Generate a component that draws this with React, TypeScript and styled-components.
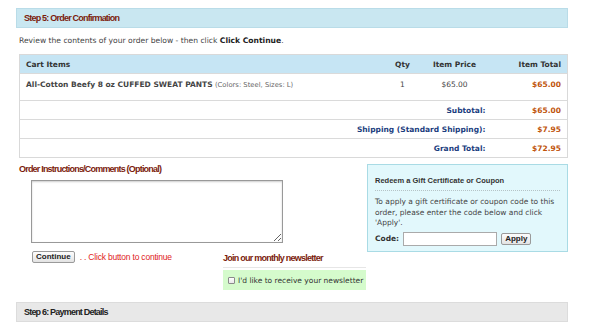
import React from 'react';
import styled, { createGlobalStyle } from 'styled-components';

const GlobalStyle = createGlobalStyle`
  body {
    margin: 0;
    background: #ffffff;
    font-family: 'DejaVu Sans', Verdana, sans-serif;
    color: #333333;
  }
`;

const Page = styled.div`
  width: 552px;
  padding: 8px 0 0 16px;
`;

const StepBar = styled.div<{ $grey?: boolean }>`
  height: 18px;
  display: flex;
  align-items: center;
  padding-left: 7px;
  background: ${(p) => (p.$grey ? '#e8e8e8' : '#c9e7f1')};
  border: 1px solid ${(p) => (p.$grey ? '#dcdcdc' : '#b9dce8')};
  font-family: 'Liberation Sans', Arial, sans-serif;
  font-weight: bold;
  font-size: 9px;
  letter-spacing: ${(p) => (p.$grey ? '-0.8px' : '-0.78px')};
  color: ${(p) => (p.$grey ? '#222222' : '#7b1b0c')};
`;

const Intro = styled.p`
  margin: 0;
  padding: 8px 0 0 3px;
  height: 18px;
  font-size: 7.6px;
  line-height: 10px;
  color: #444444;
  b {
    color: #222;
  }
`;

const CartTable = styled.table`
  margin-left: 3px;
  width: 549px;
  border-collapse: collapse;
  font-size: 7.5px;
  border: 1px solid #d9d9d9;
`;

const HeadCell = styled.th<{ $align?: string; $w?: number }>`
  height: 19px;
  padding: 0 6px;
  box-sizing: border-box;
  ${(p) => (p.$w ? `width: ${p.$w}px;` : '')}
  background: #c6e5f4;
  text-align: ${(p) => p.$align || 'left'};
  font-weight: bold;
  color: #333333;
  white-space: nowrap;
`;

const Cell = styled.td<{ $align?: string; $top?: boolean }>`
  height: ${(p) => (p.$top ? 20 : 18)}px;
  padding: ${(p) => (p.$top ? '6px 6px 0' : '0 6px')};
  vertical-align: ${(p) => (p.$top ? 'top' : 'middle')};
  text-align: ${(p) => p.$align || 'left'};
  border-top: 1px solid #dadada;
  color: #444444;
  white-space: nowrap;
  small {
    font-size: 6.8px;
    color: #666;
    font-weight: normal;
  }
`;

const Label = styled(Cell)`
  color: #1b3d7e;
  font-weight: bold;
  padding-right: 10px;
`;

const Amount = styled(Cell)`
  color: #c0540c;
  font-weight: bold;
`;

const Lower = styled.div`
  display: flex;
  padding-top: 6px;
`;

const LeftCol = styled.div`
  width: 348px;
  padding-left: 3px;
`;

const SectionTitle = styled.div`
  font-family: 'Liberation Sans', Arial, sans-serif;
  font-weight: bold;
  font-size: 9px;
  letter-spacing: -0.8px;
  color: #7b1b0c;
  height: 10px;
  line-height: 10px;
`;

const Comments = styled.textarea`
  display: block;
  margin: 6px 0 0 12px;
  width: 252px;
  height: 63px;
  box-sizing: border-box;
  border: 1px solid #999;
  box-shadow: inset 0 1px 2px rgba(0, 0, 0, 0.2);
  resize: both;
`;

const ActionRow = styled.div`
  display: flex;
  padding-top: 8px;
`;

const ContinueArea = styled.div`
  width: 191px;
  padding-left: 13px;
  display: flex;
  align-items: flex-start;
  gap: 5px;
`;

const SmallButton = styled.button`
  font-family: 'Liberation Sans', Arial, sans-serif;
  font-weight: bold;
  font-size: 8px;
  height: 12px;
  padding: 0 3px;
  line-height: 10px;
  color: #222;
  background: linear-gradient(#fdfdfd, #e3e3e3);
  border: 1px solid #9a9a9a;
  border-radius: 2px;
`;

const Hint = styled.span`
  font-family: 'Liberation Sans', Arial, sans-serif;
  font-size: 8.5px;
  color: #e01b1b;
  line-height: 12px;
  letter-spacing: -0.2px;
`;

const Newsletter = styled.div`
  width: 143px;
`;

const NewsTitle = styled(SectionTitle)`
  letter-spacing: -0.75px;
  padding-bottom: 4px;
  border-bottom: 1px solid #e6e6e6;
  margin-top: 2px;
`;

const NewsBox = styled.label`
  display: flex;
  align-items: center;
  gap: 3px;
  margin-top: 2px;
  height: 20px;
  padding-left: 5px;
  background: #d5fbcc;
  font-size: 7.5px;
  color: #333;
`;

const Check = styled.input`
  appearance: none;
  width: 7px;
  height: 7px;
  margin: 0;
  border: 1px solid #8a8a8a;
  border-radius: 1px;
  background: linear-gradient(#ffffff, #e8e8e8);
`;

const CouponBox = styled.div`
  width: 185px;
  height: 76px;
  padding: 10px 7px 0 7px;
  background: #e2f8fc;
  border: 1px solid #a9dbe5;
  font-size: 7.5px;
  color: #444;
`;

const CouponTitle = styled.div`
  font-family: 'Liberation Sans', Arial, sans-serif;
  font-weight: bold;
  font-size: 7.5px;
  color: #333;
  padding-top: 1px;
  padding-bottom: 5px;
  border-bottom: 1px dotted #b5c3c6;
`;

const CouponText = styled.p`
  margin: 6px 0 0;
  line-height: 10.5px;
`;

const CodeRow = styled.div`
  display: flex;
  align-items: center;
  gap: 4px;
  margin-top: 3px;
  font-weight: bold;
  color: #333;
`;

const CodeInput = styled.input`
  width: 94px;
  height: 14px;
  box-sizing: border-box;
  border: 1px solid #aaa;
  margin: 0;
`;

const Gap = styled.div`
  height: 12px;
`;

export default function App() {
  return (
    <Page>
      <GlobalStyle />
      <StepBar>Step 5: Order Confirmation</StepBar>
      <Intro>
        Review the contents of your order below - then click <b>Click Continue</b>.
      </Intro>
      <CartTable>
        <thead>
          <tr>
            <HeadCell>Cart Items</HeadCell>
            <HeadCell $align="center" $w={22} style={{ padding: 0 }}>Qty</HeadCell>
            <HeadCell $align="center" $w={82}>Item Price</HeadCell>
            <HeadCell $align="right" $w={72}>Item Total</HeadCell>
          </tr>
        </thead>
        <tbody>
          <tr>
            <Cell $top>
              <b>All-Cotton Beefy 8 oz CUFFED SWEAT PANTS</b> <small>(Colors: Steel, Sizes: L)</small>
            </Cell>
            <Cell $top $align="center" style={{ padding: '6px 0 0' }}>1</Cell>
            <Cell $top $align="center">$65.00</Cell>
            <Amount $top $align="right">$65.00</Amount>
          </tr>
          <tr>
            <Label colSpan={3} $align="right">Subtotal:</Label>
            <Amount $align="right">$65.00</Amount>
          </tr>
          <tr>
            <Label colSpan={3} $align="right">Shipping (Standard Shipping):</Label>
            <Amount $align="right">$7.95</Amount>
          </tr>
          <tr>
            <Label colSpan={3} $align="right">Grand Total:</Label>
            <Amount $align="right">$72.95</Amount>
          </tr>
        </tbody>
      </CartTable>
      <Lower>
        <LeftCol>
          <SectionTitle>Order Instructions/Comments (Optional)</SectionTitle>
          <Comments />
          <ActionRow>
            <ContinueArea>
              <SmallButton>Continue</SmallButton>
              <Hint>. . Click button to continue</Hint>
            </ContinueArea>
            <Newsletter>
              <NewsTitle>Join our monthly newsletter</NewsTitle>
              <NewsBox>
                <Check type="checkbox" />
                I'd like to receive your newsletter
              </NewsBox>
            </Newsletter>
          </ActionRow>
        </LeftCol>
        <CouponBox>
          <CouponTitle>Redeem a Gift Certificate or Coupon</CouponTitle>
          <CouponText>
            To apply a gift certificate or coupon code to this order, please enter the code below and click 'Apply'.
          </CouponText>
          <CodeRow>
            Code: <CodeInput />
            <SmallButton>Apply</SmallButton>
          </CodeRow>
        </CouponBox>
      </Lower>
      <Gap />
      <StepBar $grey>Step 6: Payment Details</StepBar>
    </Page>
  );
}
